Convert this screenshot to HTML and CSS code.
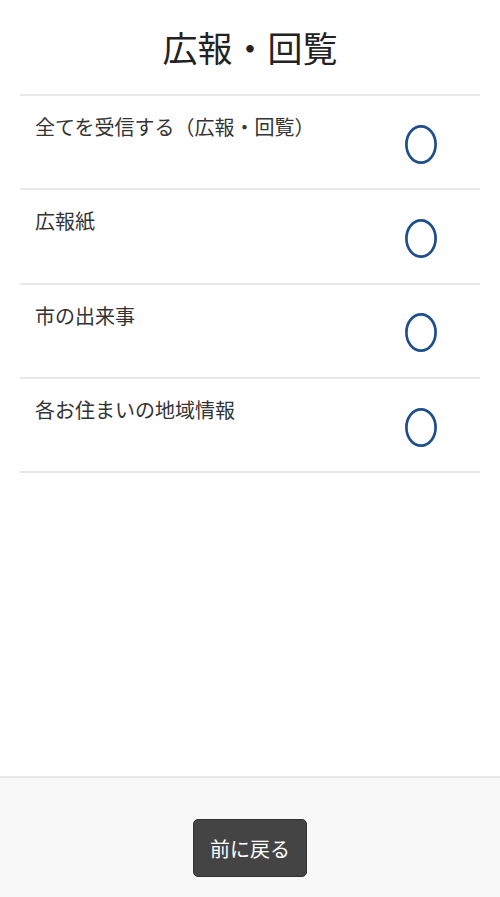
FILE: index.html
```html
<!DOCTYPE html>
<html lang="ja">
<head>
<meta charset="utf-8">
<title>広報・回覧</title>
<link rel="stylesheet" href="styles.css">
</head>
<body>
<div class="page">
  <main class="main">
    <h1 class="title">広報・回覧</h1>
    <ul class="list">
      <li class="row"><span class="label">全てを受信する（広報・回覧）</span><span class="radio"><svg viewBox="0 0 32 39" width="32" height="39"><ellipse cx="16" cy="19.5" rx="14.6" ry="18.1" fill="none" stroke="#1f4e8c" stroke-width="2.7"/></svg></span></li>
      <li class="row"><span class="label">広報紙</span><span class="radio"><svg viewBox="0 0 32 39" width="32" height="39"><ellipse cx="16" cy="19.5" rx="14.6" ry="18.1" fill="none" stroke="#1f4e8c" stroke-width="2.7"/></svg></span></li>
      <li class="row"><span class="label">市の出来事</span><span class="radio"><svg viewBox="0 0 32 39" width="32" height="39"><ellipse cx="16" cy="19.5" rx="14.6" ry="18.1" fill="none" stroke="#1f4e8c" stroke-width="2.7"/></svg></span></li>
      <li class="row"><span class="label">各お住まいの地域情報</span><span class="radio"><svg viewBox="0 0 32 39" width="32" height="39"><ellipse cx="16" cy="19.5" rx="14.6" ry="18.1" fill="none" stroke="#1f4e8c" stroke-width="2.7"/></svg></span></li>
    </ul>
  </main>
  <footer class="footer">
    <button class="back" type="button">前に戻る</button>
  </footer>
</div>
</body>
</html>
```
FILE: styles.css
```css
* { box-sizing: border-box; }
html, body { margin: 0; padding: 0; background: #fff; }
body {
  font-family: "Noto Sans CJK JP", "Noto Sans", sans-serif;
  color: #333;
}
.page {
  display: flex;
  flex-direction: column;
  height: 897px;
}
.main { flex: 1; }
.title {
  margin: 0;
  height: 94px;
  display: flex;
  align-items: center;
  justify-content: center;
  font-size: 35px;
  font-weight: 400;
  color: #222;
  padding-bottom: 2px;
}
.list {
  list-style: none;
  margin: 0 20px;
  padding: 0;
  border-bottom: 2px solid #e8e8e8;
}
.row {
  display: flex;
  justify-content: space-between;
  height: 94.3px;
  border-top: 2px solid #e8e8e8;
  padding: 0 43px 0 15px;
}
.label {
  font-size: 20px;
  line-height: 28px;
  padding-top: 17px;
}
.radio {
  display: flex;
  align-items: center;
  padding-top: 4px;
}
.radio svg { display: block; }
.footer {
  height: 121px;
  border-top: 2px solid #e8e8e8;
  background: #f8f8f8;
  display: flex;
  justify-content: center;
  padding-top: 41px;
}
.back {
  width: 114px;
  height: 58px;
  background: #444;
  border: 1px solid #333;
  border-radius: 5px;
  color: #fff;
  font-family: "Noto Sans CJK JP", "Noto Sans", sans-serif;
  font-size: 20px;
  padding: 0;
}
```
